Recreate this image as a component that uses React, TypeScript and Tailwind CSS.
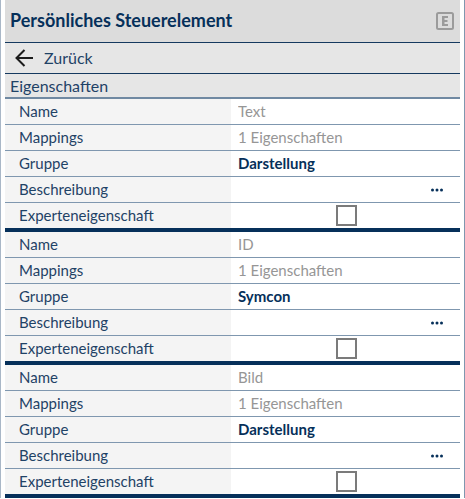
import React, { useState } from 'react';

interface ElementProperty {
  id: string;
  name: string;
  mappings: number;
  group: string;
}

const elements: ElementProperty[] = [
  { id: 'text', name: 'Text', mappings: 1, group: 'Darstellung' },
  { id: 'id', name: 'ID', mappings: 1, group: 'Symcon' },
  { id: 'image', name: 'Bild', mappings: 1, group: 'Darstellung' },
];

interface RowProps {
  label: string;
  htmlFor: string;
  last?: boolean;
  children: React.ReactNode;
}

const Row: React.FC<RowProps> = ({ label, htmlFor, last, children }) => (
  <div className={last ? 'flex h-[25px]' : 'flex h-[26px] border-b border-[#7f97af]'}>
    <label htmlFor={htmlFor} className="flex w-[226px] shrink-0 items-center bg-[#f4f4f4] pb-0.5 pl-3.5 text-[#1f4266]">
      {label}
    </label>
    <div className="flex min-w-0 flex-1 items-center bg-white pl-[7px]">{children}</div>
  </div>
);

const PropertyGroup: React.FC<{ element: ElementProperty }> = ({ element }) => {
  const [name, setName] = useState(element.name);
  const [group, setGroup] = useState(element.group);
  const [expert, setExpert] = useState(false);
  const { id } = element;

  return (
    <section className="border-b-4 border-[#06305a]">
      <Row label="Name" htmlFor={`${id}-name`}>
        <input
          id={`${id}-name`}
          type="text"
          value={name}
          onChange={(e) => setName(e.target.value)}
          className="w-full bg-transparent pb-0.5 text-[#969696] outline-none"
        />
      </Row>
      <Row label="Mappings" htmlFor={`${id}-mappings`}>
        <button id={`${id}-mappings`} type="button" className="w-full pb-0.5 text-left text-[#969696]">
          {element.mappings} Eigenschaften
        </button>
      </Row>
      <Row label="Gruppe" htmlFor={`${id}-group`}>
        <input
          id={`${id}-group`}
          type="text"
          value={group}
          onChange={(e) => setGroup(e.target.value)}
          className="w-full bg-transparent pb-0.5 font-bold text-[#06305a] outline-none"
        />
      </Row>
      <Row label="Beschreibung" htmlFor={`${id}-description`}>
        <button
          id={`${id}-description`}
          type="button"
          className="flex h-full w-full items-center justify-end pr-4"
        >
          <svg viewBox="0 0 14 4" className="h-1 w-3.5 fill-[#06305a]" aria-hidden="true">
            <circle cx="2.5" cy="2" r="1.5" />
            <circle cx="7" cy="2" r="1.5" />
            <circle cx="11.5" cy="2" r="1.5" />
          </svg>
        </button>
      </Row>
      <Row label="Experteneigenschaft" htmlFor={`${id}-expert`} last>
        <div className="flex w-full justify-center pr-1.5">
          <input
            id={`${id}-expert`}
            type="checkbox"
            checked={expert}
            onChange={(e) => setExpert(e.target.checked)}
            className="size-[21px] appearance-none border-2 border-[#7b7b7b] bg-white checked:bg-[#06305a]"
          />
        </div>
      </Row>
    </section>
  );
};

export default function App() {
  return (
    <main className="border-l border-r border-l-[#a9b7c7] border-r-[#7f97af] bg-white px-1 font-['Lato',sans-serif] text-[15px] leading-5 text-[#1f4266]">
      <header className="flex h-[43px] items-center justify-between border-b border-[#15395f] bg-[#dcdcdc] pr-1.5 pl-[5px]">
        <h1 className="pb-0.5 text-[18px] leading-6 font-bold text-[#06305a]">Persönliches Steuerelement</h1>
        <button type="button" aria-label="Expertenansicht">
          <svg viewBox="0 0 18 18" className="size-[18px]" fill="none" stroke="#9b9b9b" strokeWidth="2">
            <rect x="1" y="1" width="16" height="16" rx="1.5" />
            <path d="M12 5H7v8h5M7 9h4.5" />
            <path d="M7.5 4v10" />
          </svg>
        </button>
      </header>
      <nav className="flex h-[31px] items-center border-b border-[#15395f] bg-[#e6e6e6] pl-2.5">
        <button type="button" className="flex items-center gap-2.5 text-[16px]">
          <svg viewBox="0 0 19 18" className="h-[18px] w-[19px]" fill="none" stroke="#1c1c1c" strokeWidth="2">
            <path d="M9.5 1 1.5 9l8 8M1.5 9H18" />
          </svg>
          Zurück
        </button>
      </nav>
      <h2 className="flex h-[25px] items-center border-b-2 border-[#7089a2] bg-[#e6e6e6] pl-[5px] text-[16px]">
        Eigenschaften
      </h2>
      {elements.map((element) => (
        <PropertyGroup key={element.id} element={element} />
      ))}
    </main>
  );
}
